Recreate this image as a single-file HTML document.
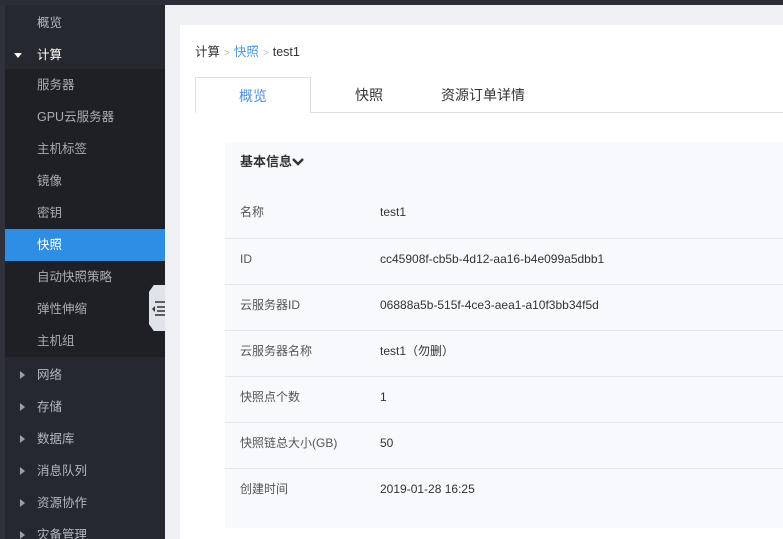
<!DOCTYPE html>
<html><head><meta charset="utf-8"><style>
*{margin:0;padding:0;box-sizing:border-box}
html,body{width:783px;height:539px;overflow:hidden}
body{background:#eef0f4;font-family:"Liberation Sans","Noto Sans CJK SC",sans-serif;font-size:12px;position:relative}
.top{position:absolute;left:0;top:0;width:783px;height:5px;background:#2b2e36}
.strip{position:absolute;left:0;top:5px;width:5px;height:534px;background:#2f323a}
.side{position:absolute;left:5px;top:5px;width:160px;height:534px;background:#25282e}
.it{position:absolute;left:0;width:160px;height:32px;line-height:32px;color:#b5b8bf;padding-left:32px;font-size:12.5px}
.sub{position:absolute;left:0;top:64px;width:160px;height:288px;background:#1e2025}
.sub .it{position:absolute;color:#a9acb3}
.act{background:#2e8ee6;color:#fff!important}
.tri{position:absolute;left:15px;top:12px;width:0;height:0;border-top:4px solid transparent;border-bottom:4px solid transparent;border-left:5px solid #9aa0a8}
.tabc{position:absolute;left:149px;top:285px;width:16px;height:46px;background:#dfe3ea;clip-path:polygon(30% 0,100% 0,100% 100%,30% 100%,0 85%,0 15%)}
.card{position:absolute;left:180px;top:25px;width:603px;height:514px;background:#fff}
.bc{position:absolute;left:195px;top:41px;color:#333;font-size:12.5px}
.bc .g{color:#bbb;font-size:10px;margin:0 4px}
.tab{position:absolute;top:77px;height:36px;line-height:36px;text-align:center;font-size:14px;color:#333}
.tabline{position:absolute;left:310px;top:112px;width:473px;height:1px;background:#dcdfe6}
.panel{position:absolute;left:225px;top:142px;width:558px;height:386px;background:#f7f9fc}
.ttl{position:absolute;left:240px;top:151px;font-weight:bold;color:#333;font-size:13px}
.row{position:absolute;left:225px;width:558px;height:46px;line-height:40px;color:#555;border-top:1px solid #e3e7ee}
.row span{position:absolute;left:15px}
.row b{position:absolute;left:155px;font-weight:normal;color:#333}
</style></head><body>
<div class="top"></div><div class="strip"></div>
<div class="side">
<div class="it" style="top:2px">概览</div>
<div class="it" style="top:34px;color:#fff;background:#25282e"><div style="position:absolute;left:9px;top:14px;border-left:4px solid transparent;border-right:4px solid transparent;border-top:5px solid #fff"></div>计算</div>
<div class="sub">
<div class="it" style="top:0">服务器</div>
<div class="it" style="top:32px">GPU云服务器</div>
<div class="it" style="top:64px">主机标签</div>
<div class="it" style="top:96px">镜像</div>
<div class="it" style="top:128px">密钥</div>
<div class="it act" style="top:160px">快照</div>
<div class="it" style="top:192px">自动快照策略</div>
<div class="it" style="top:224px">弹性伸缩</div>
<div class="it" style="top:256px">主机组</div>
</div>
<div class="it" style="top:354px"><i class="tri"></i>网络</div>
<div class="it" style="top:386px"><i class="tri"></i>存储</div>
<div class="it" style="top:418px"><i class="tri"></i>数据库</div>
<div class="it" style="top:450px"><i class="tri"></i>消息队列</div>
<div class="it" style="top:482px"><i class="tri"></i>资源协作</div>
<div class="it" style="top:514px"><i class="tri"></i>灾备管理</div>
</div>
<div class="tabc"><svg width="16" height="46" style="position:absolute;left:0;top:0"><g stroke="#333" stroke-width="1.5"><line x1="6" y1="17" x2="16" y2="17"/><line x1="8" y1="22" x2="16" y2="22"/><line x1="8" y1="26" x2="16" y2="26"/><line x1="6" y1="30" x2="16" y2="30"/></g><path d="M3 24 L6 21 L6 27Z" fill="#333"/></svg></div>
<div class="card"></div>
<div class="bc">计算<span class="g">&gt;</span><span style="color:#4a9ae2">快照</span><span class="g">&gt;</span>test1</div>
<div class="tab" style="left:195px;width:116px;border:1px solid #dcdfe6;border-bottom:none;color:#4a8ee8;background:#fff;height:36px">概览</div>
<div class="tab" style="left:311px;width:116px">快照</div>
<div class="tab" style="left:425px;width:116px">资源订单详情</div>
<div class="tabline"></div>
<div class="panel"></div>
<div class="ttl">基本信息<svg width="12" height="10" style="vertical-align:-1px"><path d="M1 2 L6 7 L11 2" stroke="#333" stroke-width="2.5" fill="none"/></svg></div>
<div class="row" style="top:192px;border-top:none"><span>名称</span><b>test1</b></div>
<div class="row" style="top:238px"><span>ID</span><b>cc45908f-cb5b-4d12-aa16-b4e099a5dbb1</b></div>
<div class="row" style="top:284px"><span>云服务器ID</span><b>06888a5b-515f-4ce3-aea1-a10f3bb34f5d</b></div>
<div class="row" style="top:330px"><span>云服务器名称</span><b>test1（勿删）</b></div>
<div class="row" style="top:376px"><span>快照点个数</span><b>1</b></div>
<div class="row" style="top:422px"><span>快照链总大小(GB)</span><b>50</b></div>
<div class="row" style="top:468px"><span>创建时间</span><b>2019-01-28 16:25</b></div>
</body></html>
